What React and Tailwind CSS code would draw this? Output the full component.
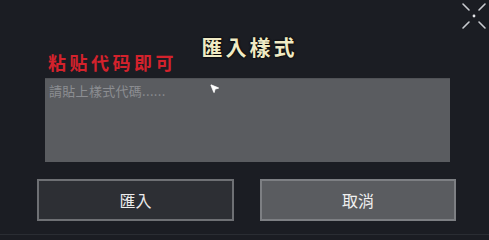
import { MousePointer2 } from "lucide-react"

export default function App() {
  return (
    <div
      className="relative w-[489px] h-[240px] overflow-hidden bg-[#1b1d23]"
      style={{ fontFamily: '"Noto Sans CJK TC", "Noto Sans CJK SC", sans-serif' }}
    >
      {/* corner expand icon */}
      <svg className="absolute right-0 top-0 w-[30px] h-[32px]" viewBox="0 0 30 32" fill="none">
        <path d="M4 4l6 6M26 4l-6 6M4 28l6-6M26 28l-6-6" stroke="#c9cbd0" strokeWidth="1.6" strokeLinecap="round" />
        <circle cx="15" cy="16" r="1.4" fill="#e6e7ea" />
      </svg>

      <div className="flex flex-col pt-[31px] pb-[13px] border-b border-[#2a2d33] h-[235px]">
        {/* header */}
        <div className="grid ml-[45px] mr-[39px] h-[47px]">
          <h1 className="[grid-area:1/1] justify-self-center pl-[4px] text-[21px] leading-[30px] font-bold tracking-[3px] text-[#efeac4] [text-shadow:0_0_2px_#000,0_0_2px_#000]">
            匯入樣式
          </h1>
          <p
            className="[grid-area:1/1] self-end justify-self-start pl-[3px] mb-[5px] text-[18px] leading-[22px] font-bold tracking-[3.5px] text-[#d3222c]"
            style={{ fontFamily: '"Noto Sans CJK SC", sans-serif' }}
          >
            粘贴代码即可
          </p>
        </div>

        {/* textarea */}
        <div className="relative ml-[45px] mr-[39px] h-[85px] bg-[#5a5c60] border-t border-[#505256]">
          <textarea
            className="w-full h-full resize-none bg-transparent px-[4px] py-[2px] text-[13px] leading-[20px] tracking-[0.3px] outline-none text-[#e0e0e0] placeholder:text-[#8c8e92]"
            placeholder="請貼上樣式代碼......"
          />
          <MousePointer2 className="absolute left-[164px] top-[4px] w-[11px] h-[11px] text-white fill-white" strokeWidth={1.5} />
        </div>

        {/* buttons */}
        <div className="flex gap-[26px] ml-[37px] mt-[17px]">
          <button className="w-[197px] h-[42px] bg-[#2d2f34] border-2 border-[#6e7074] text-[16px] text-[#ececec]">
            匯入
          </button>
          <button className="w-[196px] h-[42px] bg-[#5a5c60] border-2 border-[#7d7f83] text-[16px] text-[#f0f0f0]">
            取消
          </button>
        </div>
      </div>
    </div>
  )
}
